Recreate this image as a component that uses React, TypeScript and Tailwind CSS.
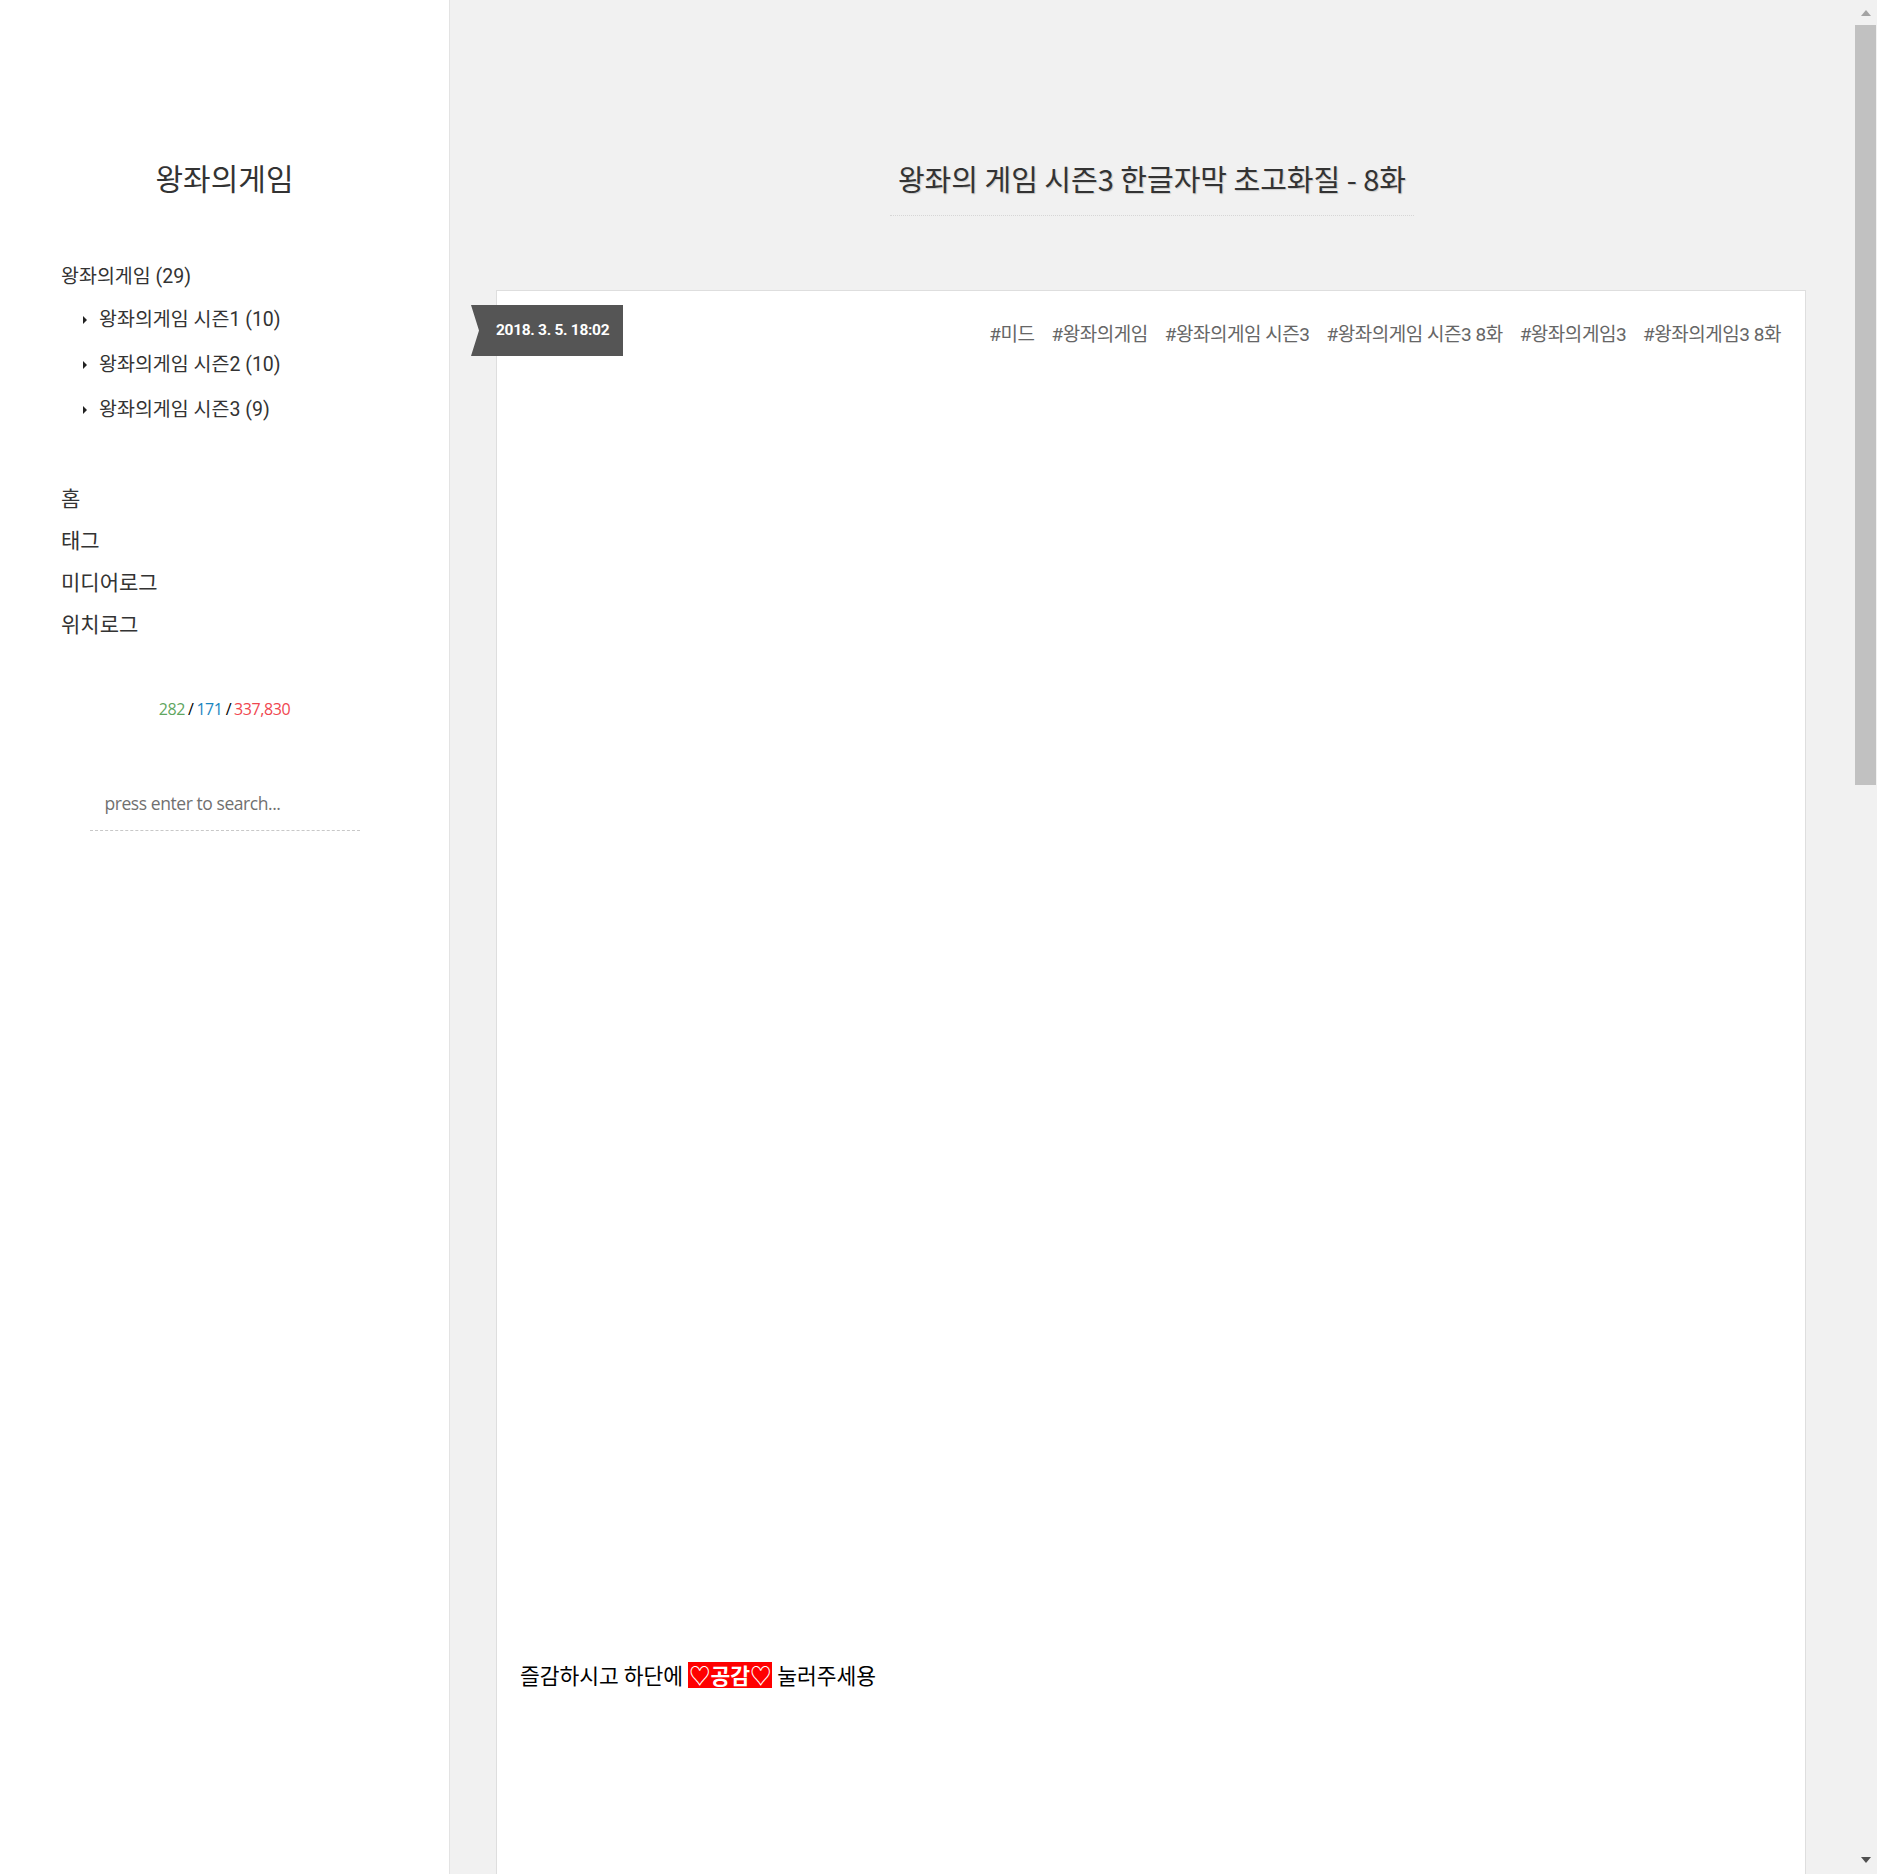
const KR = "font-['Noto_Sans_CJK_KR',sans-serif]";
const COND = "font-['Roboto','Noto_Sans_CJK_KR',sans-serif]";

const categories = [
  { name: "왕좌의게임 시즌1", count: 10 },
  { name: "왕좌의게임 시즌2", count: 10 },
  { name: "왕좌의게임 시즌3", count: 9 },
];

const navItems = ["홈", "태그", "미디어로그", "위치로그"];

const tags = [
  "#미드",
  "#왕좌의게임",
  "#왕좌의게임 시즌3",
  "#왕좌의게임 시즌3 8화",
  "#왕좌의게임3",
  "#왕좌의게임3 8화",
];

function Sidebar() {
  return (
    <aside className="w-[450px] shrink-0 bg-white border-r border-[#e3e3e3] flex flex-col">
      <h1 className={`${KR} pt-[157px] text-center text-[30px] leading-[40px] text-[#333]`}>
        왕좌의게임
      </h1>

      <div className={`${COND} mt-[62px] pl-[61px] text-[#333]`}>
        <div className="h-[36px] flex items-center text-[19.5px]">왕좌의게임 (29)</div>
        <ul className="mt-[2px]">
          {categories.map((c) => (
            <li key={c.name} className="h-[45px] flex items-center text-[19.5px]">
              <span className="w-0 h-0 ml-[22px] mr-[12px] border-y-[4px] border-y-transparent border-l-[4px] border-l-[#222]" />
              {c.name} ({c.count})
            </li>
          ))}
        </ul>
      </div>

      <ul className={`${KR} mt-[45px] pl-[61px] text-[#333]`}>
        {navItems.map((n) => (
          <li key={n} className="h-[42px] flex items-center text-[21px]">
            {n}
          </li>
        ))}
      </ul>

      <div className="mt-[49px] h-[30px] flex items-center justify-center text-[16px] font-['Open_Sans',sans-serif] tracking-tight">
        <span className="text-[#5fa65f]">282</span>
        <span className="text-black mx-[3px]">/</span>
        <span className="text-[#1a86bf]">171</span>
        <span className="text-black mx-[3px]">/</span>
        <span className="text-[#f0464f]">337,830</span>
      </div>

      <div className="mt-[66px] mx-auto w-[270px] border-b border-dashed border-[#c8c8c8] pb-[14px]">
        <input
          className="w-full h-[26px] pl-[15px] bg-transparent outline-none text-[17.5px] font-['Open_Sans',sans-serif] tracking-tight text-[#555] placeholder:text-[#707070]"
          placeholder="press enter to search..."
        />
      </div>
    </aside>
  );
}

function Ribbon() {
  return (
    <div className="-ml-[26px] w-[152px] h-[51px] bg-[#555] flex items-center pl-[25px] [clip-path:polygon(0_0,100%_0,100%_100%,0_100%,8px_50%)]">
      <span className="font-['Roboto',sans-serif] font-bold text-[15.5px] tracking-[-0.3px] text-white">
        2018. 3. 5. 18:02
      </span>
    </div>
  );
}

function Post() {
  return (
    <article className="mt-[74px] ml-[46px] mr-[48px] flex-1 bg-white border border-b-0 border-[#dedede]">
      <div className="mt-[14px] flex items-center">
        <Ribbon />
        <div className={`${COND} flex-1 flex justify-end gap-[17px] pt-[9px] pr-[24px] text-[19px] text-[#666] tracking-tight`}>
          {tags.map((t) => (
            <span key={t}>{t}</span>
          ))}
        </div>
      </div>

      <p className={`${KR} mt-[1304px] pl-[23px] h-[30px] flex items-center text-[21.5px] text-black`}>
        즐감하시고 하단에&nbsp;
        <span className="bg-[#ff0000] text-white font-bold leading-[26px] px-[1px]">♡공감♡</span>
        &nbsp;눌러주세용
      </p>
    </article>
  );
}

function FakeScrollbar() {
  return (
    <div className="w-[23px] shrink-0 bg-[#f1f1f1] flex flex-col items-center">
      <span className="mt-[10px] w-0 h-0 border-x-[5.5px] border-x-transparent border-b-[6px] border-b-[#a3a3a3]" />
      <div className="mt-[9px] w-[21px] h-[760px] bg-[#c1c1c1] -ml-[1px]" />
      <div className="flex-1" />
      <span className="mb-[11px] w-0 h-0 border-x-[5.5px] border-x-transparent border-t-[6px] border-t-[#505050]" />
    </div>
  );
}

export default function App() {
  return (
    <div className="h-[1874px] w-[1877px] flex overflow-hidden bg-[#f1f1f1]">
      <Sidebar />
      <main className="flex-1 flex flex-col">
        <div className="pt-[158px] flex justify-center">
          <h2
            className={`${KR} px-[8px] pb-[17px] border-b border-dotted border-[#d6d6d6] text-[29px] leading-[40px] text-[#333] [text-shadow:1px_1px_1px_#c8c8c8]`}
          >
            왕좌의 게임 시즌3 한글자막 초고화질 - 8화
          </h2>
        </div>
        <Post />
      </main>
      <FakeScrollbar />
    </div>
  );
}
